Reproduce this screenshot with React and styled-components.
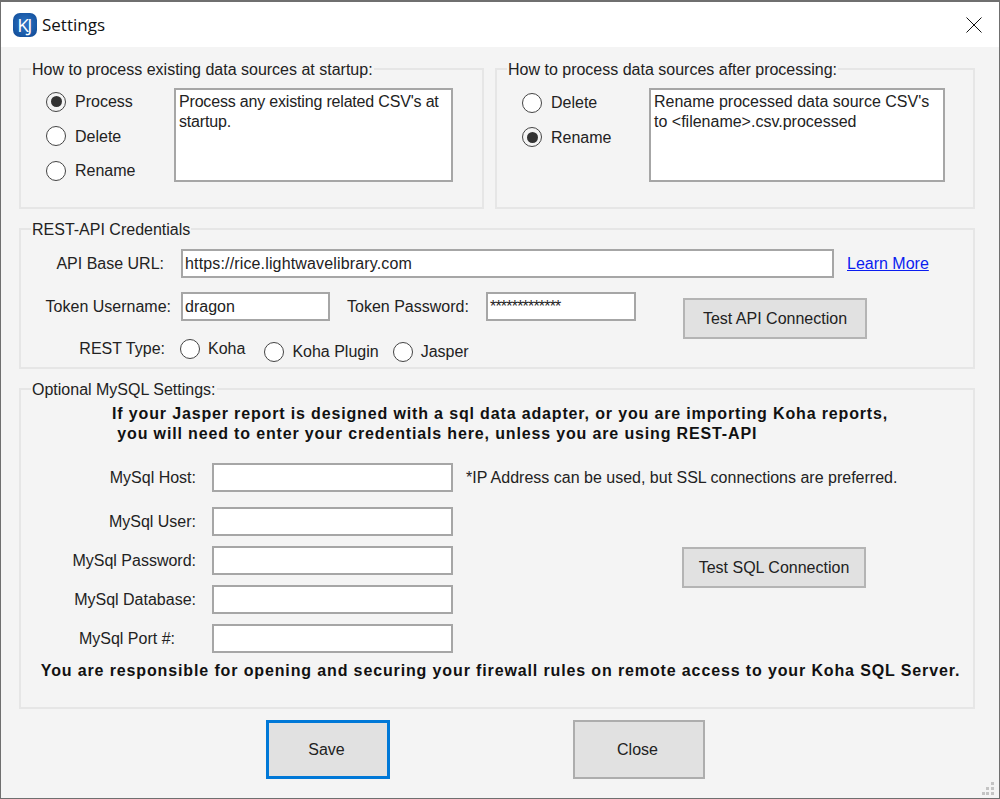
import React from 'react';
import styled, { createGlobalStyle } from 'styled-components';

const Global = createGlobalStyle`
  html, body {
    margin: 0;
    padding: 0;
    background: #f4f4f4;
  }
  * {
    box-sizing: border-box;
  }
`;

const Radio = ({ label, checked, after = 0, drop }) => (
  <RadioLabel $after={after} $drop={drop}>
    <RadioDot $checked={checked} />
    {label}
  </RadioLabel>
);

const Grip = () => (
  <GripIcon width="14" height="14" viewBox="0 0 14 14">
    {[
      [9, 0],
      [4, 5],
      [9, 5],
      [0, 10],
      [4, 10],
      [9, 10],
    ].map(([x, y]) => (
      <rect key={`${x}-${y}`} x={x} y={y} width="3" height="3" fill="#c4c4c4" />
    ))}
  </GripIcon>
);

const App = () => {
  return (
    <Window>
      <Global />
      <TitleBar>
        <Logo>KJ</Logo>
        <Title>Settings</Title>
        <CloseIcon width="16" height="16" viewBox="0 0 16 16">
          <path d="M0.5 0.5 L15.5 15.5 M15.5 0.5 L0.5 15.5" stroke="#111" strokeWidth="1" fill="none" />
        </CloseIcon>
      </TitleBar>

      <Content>
        <TopRow>
          <Group>
            <Legend>How to process existing data sources at startup:</Legend>
            <StartupBody>
              <RadioStack $top={3}>
                <Radio label="Process" checked />
                <Radio label="Delete" />
                <Radio label="Rename" />
              </RadioStack>
              <Note $width={279} $track={-0.18}>Process any existing related CSV's at startup.</Note>
            </StartupBody>
          </Group>
          <Group>
            <Legend>How to process data sources after processing:</Legend>
            <AfterBody>
              <RadioStack $top={4}>
                <Radio label="Delete" />
                <Radio label="Rename" checked />
              </RadioStack>
              <Note $width={296}>Rename processed data source CSV's to &lt;filename&gt;.csv.processed</Note>
            </AfterBody>
          </Group>
        </TopRow>

        <Group>
          <Legend>REST-API Credentials</Legend>
          <RestBody>
            <UrlRow>
              <RestLabel $inset={17}>API Base URL:</RestLabel>
              <Field $width={653} $track={0.15}>https://rice.lightwavelibrary.com</Field>
              <LearnMore href="#learn">Learn More</LearnMore>
            </UrlRow>
            <CredentialsRow>
              <CredentialsColumn>
                <TokenRow>
                  <RestLabel $inset={10}>Token Username:</RestLabel>
                  <Field $width={149}>dragon</Field>
                  <PasswordLabel>Token Password:</PasswordLabel>
                  <Field $width={150} $track={-0.8}>*************</Field>
                </TokenRow>
                <TypeRow>
                  <RestLabel $inset={16}>REST Type:</RestLabel>
                  <Radio label="Koha" after={19} />
                  <Radio label="Koha Plugin" after={14} drop />
                  <Radio label="Jasper" drop />
                </TypeRow>
              </CredentialsColumn>
              <ActionButton>Test API Connection</ActionButton>
            </CredentialsRow>
          </RestBody>
        </Group>

        <Group>
          <Legend>Optional MySQL Settings:</Legend>
          <SqlBody>
            <Notice>
              If your Jasper report is designed with a sql data adapter, or you are importing Koha reports,
              {'\n'} you will need to enter your credentials here, unless you are using REST-API
            </Notice>
            <SqlGrid>
              <SqlLabel>MySql Host:</SqlLabel>
              <Field $width={241}></Field>
              <Hint>*IP Address can be used, but SSL connections are preferred.</Hint>
              <SqlLabel>MySql User:</SqlLabel>
              <Field $width={241}></Field>
              <SqlLabel>MySql Password:</SqlLabel>
              <Field $width={241}></Field>
              <SqlButton>Test SQL Connection</SqlButton>
              <SqlLabel>MySql Database:</SqlLabel>
              <Field $width={241}></Field>
              <SqlLabel $inset={21}>MySql Port #:</SqlLabel>
              <Field $width={241}></Field>
            </SqlGrid>
            <Warning>You are responsible for opening and securing your firewall rules on remote access to your Koha SQL Server.</Warning>
          </SqlBody>
        </Group>

        <Footer>
          <DialogButton $primary>Save</DialogButton>
          <DialogButton $wide>Close</DialogButton>
        </Footer>
      </Content>
      <Grip />
    </Window>
  );
};

const Window = styled.div`
  position: relative;
  width: 1000px;
  height: 799px;
  overflow: hidden;
  background: #f4f4f4;
  border: 1px solid #6f6f6f;
  border-top-width: 2px;
  font-family: "Liberation Sans", Arial, sans-serif;
  font-size: 16px;
  color: #1a1a1a;
`;

const TitleBar = styled.div`
  display: flex;
  align-items: center;
  height: 45px;
  padding: 0 17px 0 12px;
  background: #fff;
`;

const Logo = styled.div`
  display: flex;
  align-items: center;
  justify-content: center;
  width: 24px;
  height: 24px;
  border-radius: 7px;
  background: radial-gradient(circle at 50% 45%, #2f74c4 0%, #1a5aa8 60%, #0f4690 100%);
  color: #fff;
  font-family: "Open Sans", sans-serif;
  font-size: 19px;
  letter-spacing: -1.5px;
  padding-right: 2px;
`;

const Title = styled.span`
  margin-left: 5px;
  flex: 1;
  font-family: "Open Sans", sans-serif;
  font-size: 17px;
  color: #111;
`;

const CloseIcon = styled.svg`
  display: block;
`;

const Content = styled.div`
  padding: 12px 24px 0 18px;
`;

const TopRow = styled.div`
  display: grid;
  grid-template-columns: 465px 480px;
  gap: 10px 11px;
`;

const Group = styled.fieldset`
  position: relative;
  min-width: 0;
  margin: 0 0 10px;
  padding: 0;
  border: 2px solid #e6e6e6;
`;

const Legend = styled.legend`
  margin-left: 10px;
  padding: 2px 1px 0;
  line-height: 18px;
  color: #222;
`;

const StartupBody = styled.div`
  display: flex;
  justify-content: space-between;
  padding: 9px 29px 17px 25px;
`;

const AfterBody = styled.div`
  display: flex;
  justify-content: space-between;
  padding: 9px 28px 25px 25px;
`;

const RadioLabel = styled.label`
  display: flex;
  align-items: center;
  gap: 8px;
  height: 21px;
  line-height: 21px;
  margin-right: ${(p) => p.$after}px;
  margin-top: ${(p) => (p.$drop ? 6 : 0)}px;
  color: #222;
`;

const RadioStack = styled.div`
  display: flex;
  flex-direction: column;
  gap: 13.5px;
  margin-top: ${(p) => p.$top}px;

  ${RadioLabel} {
    gap: 9px;
  }
`;

const RadioDot = styled.span`
  position: relative;
  flex: none;
  width: 20px;
  height: 20px;
  border-radius: 50%;
  border: 1.5px solid #444;
  background: ${(p) => (p.$checked ? 'transparent' : '#fff')};

  &::after {
    content: '';
    display: ${(p) => (p.$checked ? 'block' : 'none')};
    position: absolute;
    inset: 3.5px;
    border-radius: 50%;
    background: #333;
  }
`;

const Note = styled.div`
  width: ${(p) => p.$width}px;
  height: 94px;
  padding: 2px 3px;
  background: #fff;
  border: 2px solid #a6a6a6;
  line-height: 20px;
  letter-spacing: ${(p) => p.$track || 0}px;
  color: #222;
`;

const RestBody = styled.div`
  padding: 10px 0 0 0;
`;

const UrlRow = styled.div`
  display: flex;
  align-items: center;
`;

const RestLabel = styled.span`
  flex: none;
  width: 160px;
  padding-right: ${(p) => p.$inset}px;
  white-space: nowrap;
  text-align: right;
  color: #222;
`;

const Field = styled.div`
  flex: none;
  width: ${(p) => p.$width}px;
  height: 29px;
  padding: 0 2px;
  background: #fff;
  border: 2px solid #a6a6a6;
  line-height: 25px;
  letter-spacing: ${(p) => p.$track || 0}px;
  white-space: nowrap;
  color: #222;
`;

const LearnMore = styled.a`
  margin-left: 13px;
  color: #0a1cf0;
`;

const CredentialsRow = styled.div`
  display: flex;
  align-items: flex-start;
`;

const CredentialsColumn = styled.div`
  width: 662px;
`;

const TokenRow = styled.div`
  display: flex;
  align-items: center;
  margin-top: 14px;
`;

const PasswordLabel = styled.span`
  width: 156px;
  padding-left: 17px;
  white-space: nowrap;
  color: #222;
`;

const TypeRow = styled.div`
  display: flex;
  align-items: center;
  margin-top: 14px;
  padding-bottom: 5px;

  & > span {
    margin-right: -1px;
  }
`;

const ActionButton = styled.div`
  display: flex;
  align-items: center;
  justify-content: center;
  flex: none;
  width: 184px;
  height: 41px;
  margin-top: 20px;
  background: #e1e1e1;
  border: 2px solid #b4b4b4;
  color: #222;
`;

const SqlBody = styled.div`
  padding: 5px 0 26px;
`;

const Notice = styled.div`
  padding-left: 91px;
  white-space: pre;
  font-weight: 700;
  letter-spacing: 0.85px;
  line-height: 20px;
  color: #111;
`;

const SqlGrid = styled.div`
  display: grid;
  grid-template-columns: 175px 241px 1fr;
  grid-template-rows: 34px repeat(4, 29px);
  align-items: start;
  column-gap: 16px;
  row-gap: 10px;
  margin-top: 19px;
`;

const SqlLabel = styled.span`
  grid-column: 1;
  padding-right: ${(p) => p.$inset || 0}px;
  line-height: 29px;
  text-align: right;
  white-space: nowrap;
  color: #222;
`;

const Hint = styled.span`
  margin-left: -3px;
  line-height: 29px;
  white-space: nowrap;
  color: #222;
`;

const SqlButton = styled(ActionButton)`
  grid-column: 3;
  grid-row: 3 / span 2;
  margin: 1px 0 0 213px;
`;

const Warning = styled.div`
  margin-top: 8px;
  padding-left: 7px;
  text-align: center;
  font-weight: 700;
  letter-spacing: 0.87px;
  line-height: 20px;
  color: #111;
`;

const Footer = styled.div`
  display: flex;
  padding: 1px 0 0 247px;
`;

const DialogButton = styled.div`
  display: flex;
  align-items: center;
  justify-content: center;
  flex: none;
  width: ${(p) => (p.$wide ? 132 : 124)}px;
  height: 59px;
  margin-right: 183px;
  padding-right: 3px;
  background: #e1e1e1;
  border: ${(p) => (p.$primary ? '3px solid #0078d7' : '2px solid #adadad')};
  color: #222;
`;

const GripIcon = styled.svg`
  position: absolute;
  right: 3px;
  bottom: 2px;
`;

export default App;
